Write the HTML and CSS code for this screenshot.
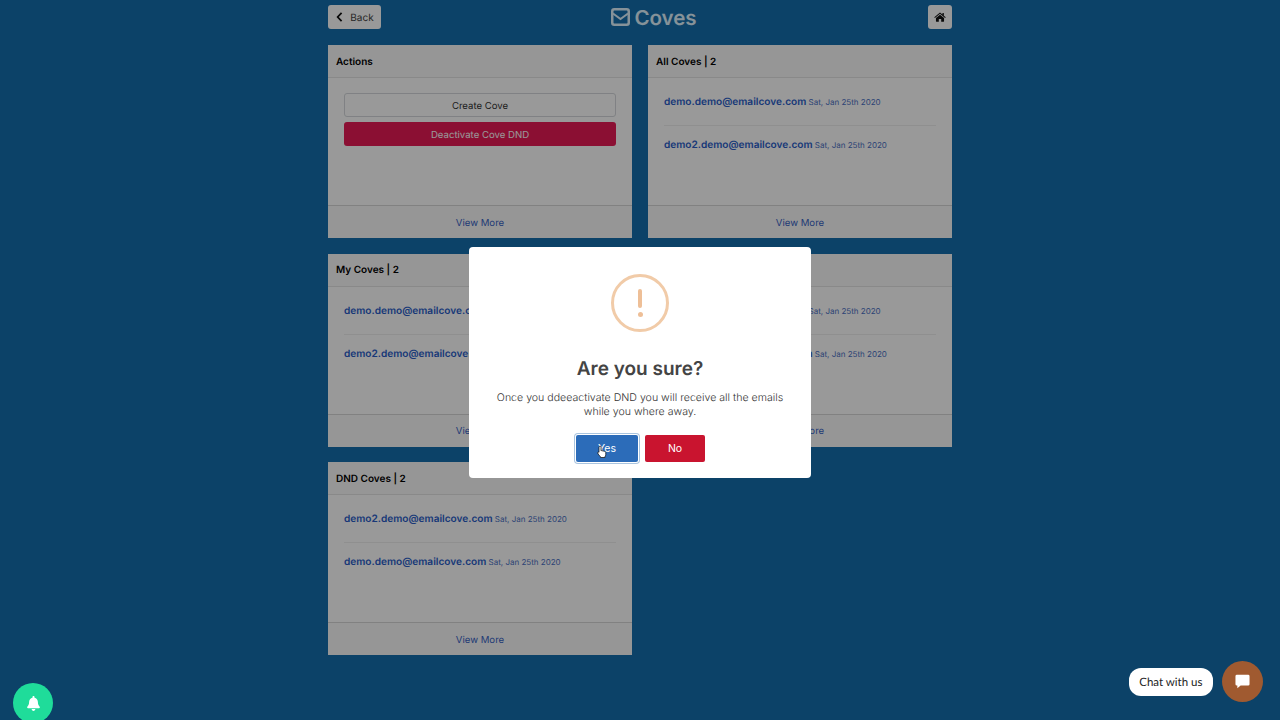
FILE: index.html
```html
<!DOCTYPE html>
<html lang="en">
<head>
<meta charset="utf-8">
<title>Coves</title>
<link rel="stylesheet" href="styles.css">
</head>
<body>
<main class="page">
  <header class="topbar">
    <a class="btn-light back"><svg class="chev" viewBox="0 0 8 12"><path d="M6.500 1 1.800 6l4.700 5" fill="none" stroke="currentColor" stroke-width="2.100"/></svg>Back</a>
    <h1 class="title"><svg class="mail" viewBox="0 0 19 18"><rect x="1.250" y="1.250" width="16.500" height="15.500" rx="2" fill="none" stroke="currentColor" stroke-width="2.500"/><path d="M2 5.500 9.500 11 17 5.500" fill="none" stroke="currentColor" stroke-width="2"/></svg>Coves</h1>
    <a class="btn-light home"><svg viewBox="0 0 16 13" class="home-ico"><path d="M8 0.600 0.400 6.800l.8 1L8 2.300l6.800 5.500.8-1-2.500-2V1.200h-1.800v2.100z" fill="#111"/><path d="M8 3.400 2.600 7.800v4.400a.6.6 0 0 0 .6.6h3.200V9.300h3.200v3.500h3.200a.6.6 0 0 0 .6-.6V7.800z" fill="#111"/></svg></a>
  </header>
  <section class="cards">
    <article class="card">
      <div class="card-head">Actions</div>
      <div class="card-body actions">
        <a class="action outline">Create Cove</a>
        <a class="action danger">Deactivate Cove DND</a>
      </div>
      <div class="card-foot">View More</div>
    </article>
    <article class="card">
      <div class="card-head">All Coves | 2</div>
      <div class="card-body">
        <div class="row"><b>demo.demo@emailcove.com</b> <small>Sat, Jan 25th 2020</small></div>
        <div class="row"><b>demo2.demo@emailcove.com</b> <small>Sat, Jan 25th 2020</small></div>
      </div>
      <div class="card-foot">View More</div>
    </article>
    <article class="card">
      <div class="card-head">My Coves | 2</div>
      <div class="card-body">
        <div class="row"><b>demo.demo@emailcove.com</b> <small>Sat, Jan 25th 2020</small></div>
        <div class="row"><b>demo2.demo@emailcove.com</b> <small>Sat, Jan 25th 2020</small></div>
      </div>
      <div class="card-foot">View More</div>
    </article>
    <article class="card">
      <div class="card-head">Shared Coves | 2</div>
      <div class="card-body">
        <div class="row"><b>demo.demo@emailcove.com</b> <small>Sat, Jan 25th 2020</small></div>
        <div class="row"><b>demo2.demo@emailcove.com</b> <small>Sat, Jan 25th 2020</small></div>
      </div>
      <div class="card-foot">View More</div>
    </article>
    <article class="card">
      <div class="card-head">DND Coves | 2</div>
      <div class="card-body">
        <div class="row"><b>demo2.demo@emailcove.com</b> <small>Sat, Jan 25th 2020</small></div>
        <div class="row"><b>demo.demo@emailcove.com</b> <small>Sat, Jan 25th 2020</small></div>
      </div>
      <div class="card-foot">View More</div>
    </article>
  </section>
</main>

<div class="overlay">
  <div class="modal">
    <div class="alert-icon"><span class="bang"></span><span class="dot"></span></div>
    <h2 class="modal-title">Are you sure?</h2>
    <p class="modal-text">Once you ddeeactivate DND you will receive all the emails while you where away.</p>
    <div class="modal-actions">
      <button class="m-btn yes">Yes<svg class="cursor" viewBox="0 0 12 16"><path d="M3.600 1.200c.8 0 1.200.6 1.200 1.300v4l.6-.2c.6-.1 1 .1 1.200.4.5-.2 1-.1 1.300.3.500-.2 1.100 0 1.300.5.600-.1 1.300.2 1.300 1v2.500c0 1.200-.5 2-1 2.800v.8H4.200v-.8C3.200 12.600 1 10.500.8 9c-.1-.8.800-1.200 1.500-.7l.1.100V2.500c0-.7.400-1.300 1.200-1.300z" fill="#fff" stroke="#111" stroke-width=".9"/></svg></button>
      <button class="m-btn no">No</button>
    </div>
  </div>
</div>

<a class="bell"><svg viewBox="0 0 14 16" class="bell-ico"><path d="M7 0c-.7 0-1.100.5-1.100 1.100v.6C3.700 2.200 2.300 4 2.300 6.200c0 3.400-1.200 4.400-2 5.300-.5.600-.1 1.500.7 1.500h12c.8 0 1.200-.9.700-1.500-.8-.9-2-1.900-2-5.300 0-2.200-1.400-4-3.600-4.500v-.6C8.100.5 7.700 0 7 0zM5 14c0 1.100.9 2 2 2s2-.9 2-2z" fill="#fff"/></svg></a>

<div class="chat">
  <span class="chat-label">Chat with us</span>
  <a class="chat-btn"><svg viewBox="0 0 16 16" class="chat-ico"><path d="M2 .8h12a1.500 1.500 0 0 1 1.500 1.500v8.500a1.500 1.500 0 0 1-1.500 1.500H6L2.500 15.300V12.300H2A1.500 1.500 0 0 1 .5 10.800V2.300A1.500 1.500 0 0 1 2 .8z" fill="#fff"/></svg></a>
</div>
</body>
</html>
```
FILE: styles.css
```css
* { box-sizing: border-box; }
html, body { height: 100%; }
body {
  margin: 0;
  background: #146ead;
  font-family: Inter, "Liberation Sans", sans-serif;
  color: #000;
  overflow: hidden;
  text-rendering: geometricPrecision;
}
.page { width: 624px; margin: 0 auto; padding-top: 5px; }
.topbar { display: flex; justify-content: space-between; align-items: flex-start; height: 40px; }
.btn-light {
  display: flex; align-items: center; justify-content: center;
  height: 24px; background: #fff; border-radius: 3px; color: #444;
  font-size: 10px; padding-top: 1px;
}
.back { width: 53px; gap: 7px; padding-left: 1px; }
.chev { width: 7px; height: 10px; color: #111; margin-top: -1px; }
.home { width: 24px; padding-top: 0; }
.home-ico { width: 12px; height: 10px; }
.title {
  display: flex; align-items: center; gap: 4px;
  margin: -1px 1px 0 0; height: 26px;
  font-size: 20.500px; font-weight: 600; color: #e0f4ff;
}
.mail { width: 19px; height: 18px; color: #e0f4ff; }
.cards { display: grid; grid-template-columns: 304px 304px; gap: 15.500px 16px; }
.card { height: 193px; background: #fff; display: flex; flex-direction: column; }
.card-head {
  height: 33px; padding: 1px 8px 0; display: flex; align-items: center;
  font-size: 10px; font-weight: 600; border-bottom: 1px solid #e4e4e4;
  background: #fbfbfb;
}
.card-body { flex: 1; padding: 17px 16px 0; }
.actions { padding-top: 15px; display: flex; flex-direction: column; gap: 5px; }
.action {
  height: 24px; border-radius: 3px; display: flex; align-items: center; justify-content: center;
  font-size: 9.600px; padding-top: 2px;
}
.outline { border: 1px solid #d5d8dc; color: #333; }
.danger { background: #e81a55; color: #fff; }
.row {
  height: 31px; margin-bottom: 12px; line-height: 15px; font-size: 8px;
  color: #2f62c8; border-bottom: 1px solid #eee; white-space: nowrap; overflow: hidden;
}
.row:last-child { border-bottom: 0; }
.row b { font-size: 10.100px; font-weight: 600; color: #2a5ec9; }
.row small { font-size: 8px; color: #4a70c4; }
.card-foot {
  height: 33px; padding-top: 2px; border-top: 1px solid #d8d8d8; display: flex; align-items: center; justify-content: center;
  font-size: 9.600px; color: #3763c4; background: #fbfbfb;
}
.overlay {
  position: fixed; inset: 0; background: rgba(0,0,0,.4);
  display: flex; justify-content: center; align-items: flex-start; padding-top: 247px;
}
.modal {
  width: 342px; height: 231px; background: #fff; border-radius: 4px;
  display: flex; flex-direction: column; align-items: center; padding-top: 27px;
}
.alert-icon {
  width: 58px; height: 58px; border-radius: 50%; border: 3px solid #f1cba8;
  display: flex; flex-direction: column; align-items: center; padding-top: 12px; gap: 4px;
}
.bang { width: 4px; height: 19px; background: #eebf97; border-radius: 2px; }
.dot { width: 5px; height: 5px; background: #eebf97; border-radius: 50%; }
.modal-title { margin: 22px 0 0; height: 30px; line-height: 30px; font-size: 19px; font-weight: 600; color: #444; }
.modal-text {
  margin: 7px 0 0; width: 300px; text-align: center; font-size: 10.600px; line-height: 14px;
  font-weight: 300; color: #333;
}
.modal-actions { display: flex; align-items: center; gap: 7px; margin-top: 16px; }
.m-btn {
  position: relative; border: 0; border-radius: 2px; height: 27px; color: #fff;
  font: 400 10.500px Inter, "Liberation Sans", sans-serif; padding: 0;
}
.yes { width: 62px; background: #2c6cb9; box-shadow: 0 0 0 1px #fff, 0 0 0 2px #a9c4df; margin-left: 1px; }
.no { width: 60px; background: #c9142f; }
.cursor { position: absolute; left: 21px; top: 10px; width: 10px; height: 14px; }
.bell {
  position: fixed; left: 13px; bottom: -3px; width: 40px; height: 40px; border-radius: 50%;
  background: #1fdc9a; display: flex; align-items: center; justify-content: center;
}
.bell-ico { width: 13px; height: 15px; }
.chat { position: fixed; right: 17px; bottom: 18px; display: flex; align-items: center; gap: 9px; }
.chat-label {
  height: 28px; padding: 1px 10.500px 0; display: flex; align-items: center; border-radius: 12px;
  background: #fff; color: #222; font-size: 11.500px; font-family: Lato, sans-serif;
}
.chat-btn {
  width: 41px; height: 41px; border-radius: 50%; background: #a05a30;
  display: flex; align-items: center; justify-content: center;
}
.chat-ico { width: 15px; height: 15px; }
```
